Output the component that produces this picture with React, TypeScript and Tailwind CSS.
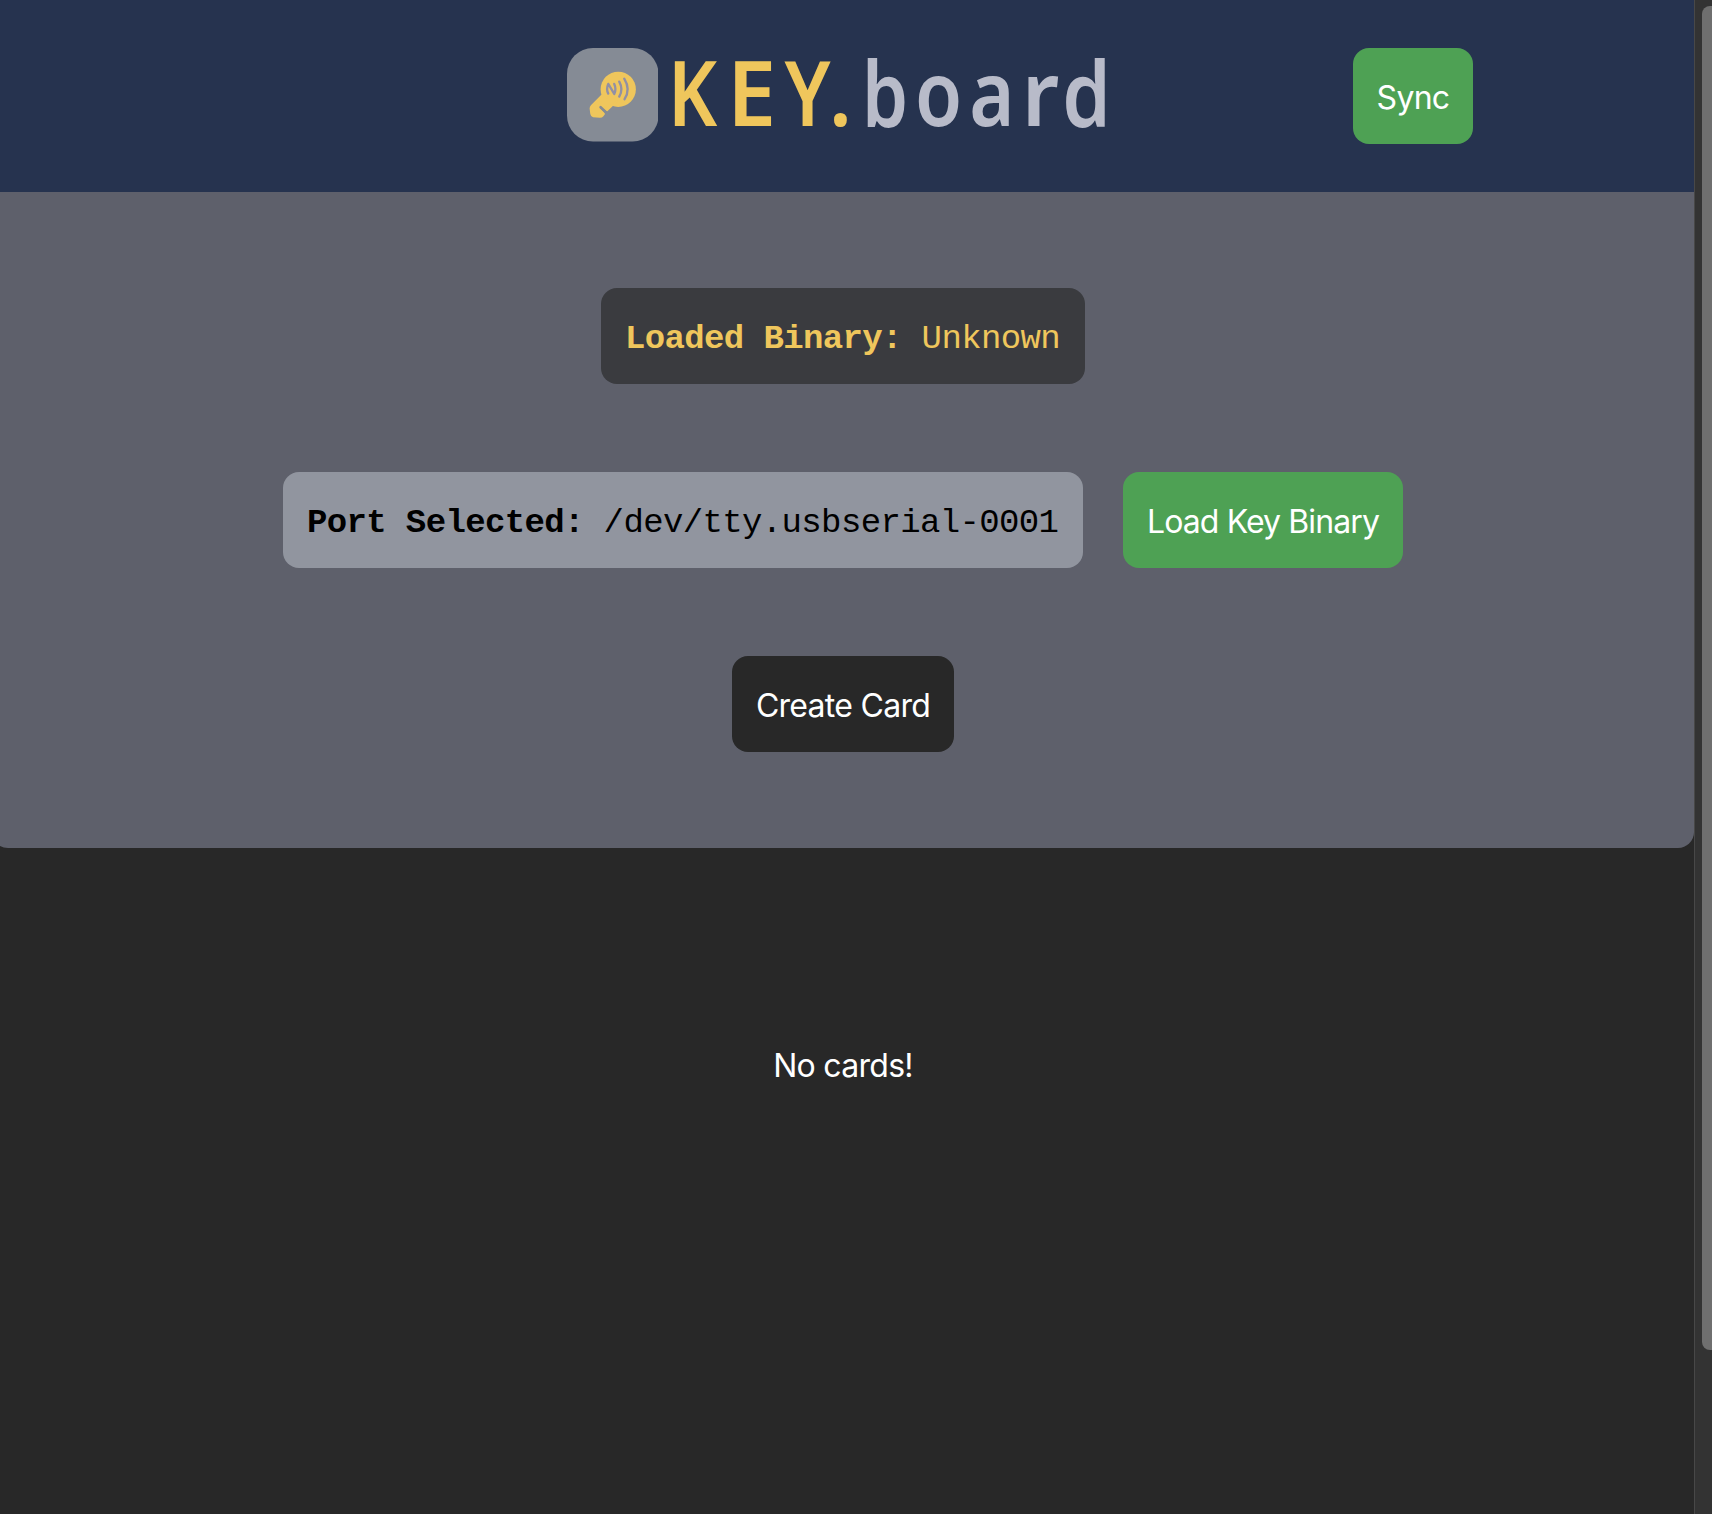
const glyphs = [
  { ch: 'K', cell: 'w-[55px] text-[#efc65c]', scale: 'scale-x-[0.85]' },
  { ch: 'E', cell: 'w-[63px] text-[#efc65c]', scale: 'scale-x-[0.98]' },
  { ch: 'Y', cell: 'w-[49px] text-[#efc65c]', scale: 'scale-x-[0.85]' },
  { ch: '.', cell: 'w-[17px] text-[#efc65c]', scale: 'scale-x-[0.92]' },
  { ch: 'b', cell: 'w-[72px] text-[#b8bbc9]', scale: 'scale-x-[0.82]' },
  { ch: 'o', cell: 'w-[35px] text-[#b8bbc9]', scale: 'scale-x-[0.85]' },
  { ch: 'a', cell: 'w-[72px] text-[#b8bbc9]', scale: 'scale-x-[0.86]' },
  { ch: 'r', cell: 'w-[25px] text-[#b8bbc9]', scale: 'scale-x-[0.96]' },
  { ch: 'd', cell: 'w-[67px] text-[#b8bbc9]', scale: 'scale-x-[0.86]' },
];

function KeyLogo() {
  return (
    <svg viewBox="50 54 275 281" className="h-[93.5px] w-[91.5px] shrink-0">
      <rect x="50" y="54" width="275" height="281" rx="78" fill="#858b95" />
      <g fill="#efc65c" stroke="#efc65c" strokeLinejoin="round">
        <circle cx="204" cy="178" r="53" stroke="none" />
        <path
          strokeWidth="6"
          d="M156 196 L124 228 Q121 231 121 236 L123 252 Q124 258 129 259 L149 261 Q154 261 157 257 L161 252 L149 238 Q147 234 150 231 Q154 228 158 232 L170 241 L185 227 L200 215 Z"
        />
      </g>
      <path d="M151 232 L166 246" stroke="#858b95" strokeWidth="8" strokeLinecap="round" />
      <g fill="none" stroke="#9290a4" strokeWidth="7" strokeLinecap="round" strokeLinejoin="round">
        <path d="M174 191 Q167 178 174 162 L192 192 Q199 178 192 162" />
        <path d="M207 155 Q220 178 207 200" />
        <path d="M222 146 Q242 178 223 208" />
      </g>
    </svg>
  );
}

function Wordmark() {
  return (
    <h1 className="ml-[6.5px] flex font-['Noto_Sans',sans-serif] text-[90px] leading-[86px] font-semibold">
      {glyphs.map((g) => (
        <span key={g.ch} className={`flex shrink-0 justify-center ${g.cell} ${g.scale}`}>
          {g.ch}
        </span>
      ))}
    </h1>
  );
}

function Button({ label, tone }: { label: string; tone: string }) {
  return (
    <button className={`h-24 shrink-0 rounded-2xl pt-[3px] text-center whitespace-nowrap text-white ${tone}`}>
      {label}
    </button>
  );
}

function Field({ label, value, tone }: { label: string; value: string; tone: string }) {
  return (
    <div
      className={`h-24 shrink-0 rounded-2xl px-6 pt-[27px] font-['Liberation_Mono',monospace] text-[34px] leading-[48px] tracking-[-0.63px] whitespace-pre ${tone}`}
    >
      <b>{label}</b> {value}
    </div>
  );
}

export default function App() {
  return (
    <div className="flex h-[1514px] w-[1712px] overflow-hidden bg-[#282828] font-['Inter',sans-serif] text-[32px] leading-[48px] tracking-[-0.72px]">
      <main className="-ml-2 flex w-[1702px] shrink-0 flex-col">
        <header className="flex h-48 shrink-0 items-start bg-[#26334f] pt-12">
          <div className="ml-[574.5px] flex w-[786.5px] shrink-0 tracking-normal">
            <KeyLogo />
            <Wordmark />
          </div>
          <Button label="Sync" tone="w-[120px] bg-[#4ea154]" />
        </header>
        <section className="flex h-[656px] shrink-0 flex-col items-center gap-[88px] rounded-b-2xl bg-[#5e606b] pt-24">
          <Field label="Loaded Binary:" value="Unknown" tone="w-[484px] bg-[#3a3b3f] text-[#efc65c]" />
          <div className="flex gap-10">
            <Field label="Port Selected:" value="/dev/tty.usbserial-0001" tone="w-[800px] bg-[#91959f] text-black" />
            <Button label="Load Key Binary" tone="w-[280px] bg-[#4ea154] tracking-[-0.9px]" />
          </div>
          <Button label="Create Card" tone="w-[222px] bg-[#282828]" />
        </section>
        <p className="mt-[194px] text-center text-white">No cards!</p>
      </main>
      <div className="flex w-[18px] shrink-0 justify-end border-l border-[#484848] bg-[#333333]">
        <div className="mt-1.5 h-[1344px] w-2.5 rounded-l-lg bg-[#6f6f6f]" />
      </div>
    </div>
  );
}
